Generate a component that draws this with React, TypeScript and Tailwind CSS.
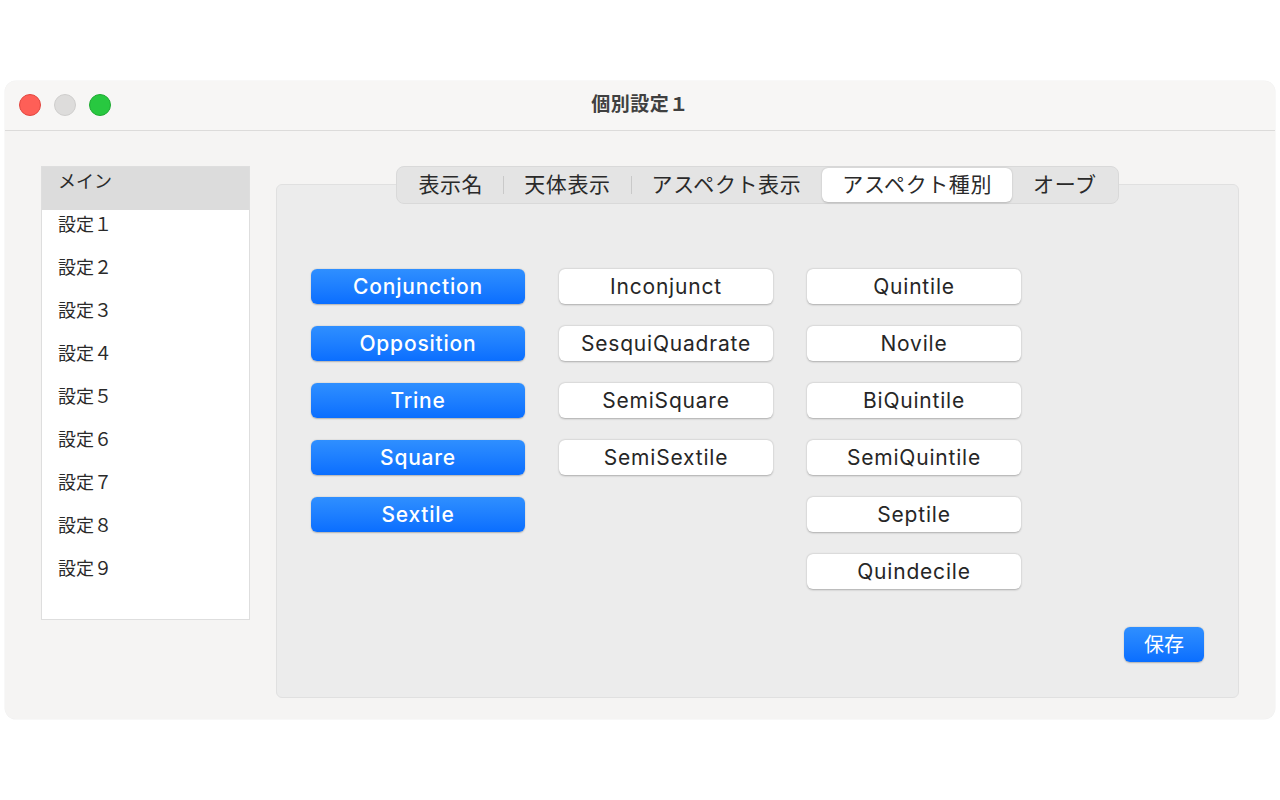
import React from "react";

const FONT = '"Inter", "Noto Sans CJK JP", "Noto Sans", sans-serif';

const sidebarItems = ["メイン", "設定１", "設定２", "設定３", "設定４", "設定５", "設定６", "設定７", "設定８", "設定９"];
const tabs = ["表示名", "天体表示", "アスペクト表示", "アスペクト種別", "オーブ"];

const col1 = ["Conjunction", "Opposition", "Trine", "Square", "Sextile"];
const col2 = ["Inconjunct", "SesquiQuadrate", "SemiSquare", "SemiSextile"];
const col3 = ["Quintile", "Novile", "BiQuintile", "SemiQuintile", "Septile", "Quindecile"];

function AspectButton({ label, on }: { label: string; on: boolean }) {
  return (
    <button
      className={`w-[214px] h-[35px] rounded-[6px] text-[21px] tracking-[0.8px] leading-none flex items-center justify-center ${
        on
          ? "bg-gradient-to-b from-[#2f8fff] to-[#0a6eff] text-white font-medium shadow-[0_0.5px_1.5px_rgba(0,0,0,0.25)]"
          : "bg-white text-[#262626] shadow-[0_0.5px_2px_rgba(0,0,0,0.28)]"
      }`}
    >
      {label}
    </button>
  );
}

function Column({ items, on }: { items: string[]; on: boolean }) {
  return (
    <div className="flex flex-col gap-[22px]">
      {items.map((s) => (
        <AspectButton key={s} label={s} on={on} />
      ))}
    </div>
  );
}

export default function App() {
  return (
    <div className="w-[1280px] h-[800px] bg-white pt-[81px] px-[5px]" style={{ fontFamily: FONT }}>
      <div className="h-[638px] rounded-[11px] bg-[#f5f4f3] shadow-[0_0_0_0.5px_rgba(0,0,0,0.06)] flex flex-col overflow-hidden">
        {/* タイトルバー */}
        <div className="h-[50px] shrink-0 relative flex items-center justify-center border-b border-[#dcdbda] bg-[#f7f6f5]">
          <div className="absolute left-[14px] top-[13px] flex gap-[13px]">
            <span className="w-[22px] h-[22px] rounded-full bg-[#fe5f57] border border-[#e2463f]" />
            <span className="w-[22px] h-[22px] rounded-full bg-[#dddcdb] border border-[#cfcecd]" />
            <span className="w-[22px] h-[22px] rounded-full bg-[#28c840] border border-[#1eaa32]" />
          </div>
          <span className="text-[19px] font-bold text-[#404040] tracking-[0.5px]">個別設定１</span>
        </div>

        {/* 本体 */}
        <div className="flex pl-[36px] pr-[36px] pt-[35px] gap-[26px]">
          <div className="w-[209px] h-[454px] shrink-0 bg-white border border-[#dedede]">
            {sidebarItems.map((s, i) => (
              <div
                key={s}
                className={`h-[43px] pl-[16px] pt-[2px] text-[18px] leading-[26px] text-[#2a2a2a] ${
                  i === 0 ? "bg-[#dcdcdc]" : ""
                }`}
              >
                {s}
              </div>
            ))}
          </div>

          <div className="flex-1 flex flex-col">
            <div className="flex justify-center relative z-10">
              <div className="h-[38px] flex items-center rounded-[8px] bg-[#e4e4e4] border border-[#d9d9d9] px-[1px]">
                {tabs.map((t, i) => {
                  const active = i === 3;
                  const hide = i === 4 || i === 3;
                  return (
                    <React.Fragment key={t}>
                      {i > 0 && (
                        <span className={`w-px h-[18px] ${hide ? "bg-transparent" : "bg-[#c9c9c9]"}`} />
                      )}
                      <span
                        className={`h-[34px] flex items-center px-[20px] text-[21px] tracking-[0.6px] text-[#2a2a2a] rounded-[6px] ${
                          active ? "bg-white shadow-[0_0.5px_2px_rgba(0,0,0,0.2)]" : ""
                        }`}
                      >
                        {t}
                      </span>
                    </React.Fragment>
                  );
                })}
              </div>
            </div>

            <div className="-mt-[20px] h-[514px] rounded-[6px] bg-[#ececec] border border-[#e0e0e0] flex flex-col pl-[34px] pr-[34px] pt-[84px] pb-[35px]">
              <div className="flex gap-[34px] items-start">
                <Column items={col1} on />
                <Column items={col2} on={false} />
                <Column items={col3} on={false} />
              </div>
              <div className="flex-1" />
              <div className="flex justify-end">
                <button className="w-[80px] h-[35px] rounded-[6px] bg-gradient-to-b from-[#2f8fff] to-[#0a6eff] text-white text-[20px] shadow-[0_0.5px_1.5px_rgba(0,0,0,0.25)]">
                  保存
                </button>
              </div>
            </div>
          </div>
        </div>
      </div>
    </div>
  );
}
